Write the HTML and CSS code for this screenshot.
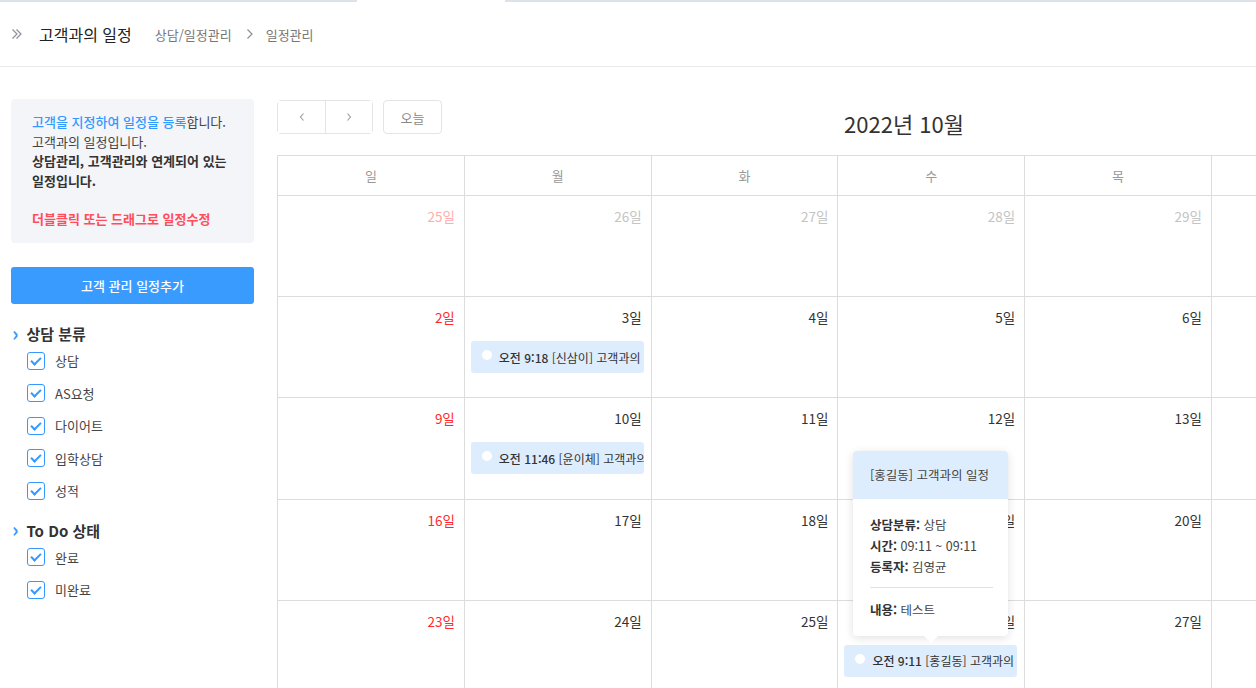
FILE: index.html
```html
<!DOCTYPE html>
<html lang="ko">
<head>
    <meta charset="UTF-8">
    <meta name="viewport" content="width=device-width, initial-scale=1.0">
    <title>고객과의 일정</title>
    <link rel="stylesheet" href="styles.css">
</head>
<body>
    <div class="tabline">
        <span class="tabline-left"></span>
        <span class="tabline-gap"></span>
        <span class="tabline-right"></span>
    </div>

    <header class="page-header">
        <svg class="header-icon" width="12" height="12" viewBox="0 0 12 12">
            <path d="M1.5 1.5 L6 6 L1.5 10.5 M5.5 1.5 L10 6 L5.5 10.5" fill="none" stroke="#8a8f99" stroke-width="1.2"/>
        </svg>
        <h1>고객과의 일정</h1>
        <span class="crumb">상담/일정관리</span>
        <svg class="crumb-sep" width="10" height="12" viewBox="0 0 10 12">
            <path d="M2.5 1.5 L7 6 L2.5 10.5" fill="none" stroke="#8a8f99" stroke-width="1.2"/>
        </svg>
        <span class="crumb">일정관리</span>
    </header>

    <div class="page">
        <aside class="sidebar">
            <div class="info-box">
                <p><span class="blue">고객을 지정하여 일정을 등록</span>합니다.</p>
                <p>고객과의 일정입니다.</p>
                <p class="bold">상담관리, 고객관리와 연계되어 있는 일정입니다.</p>
                <p class="red">더블클릭 또는 드래그로 일정수정</p>
            </div>

            <button class="btn-add">고객 관리 일정추가</button>

            <div class="filter">
                <h3 class="filter-title"><span class="chev">›</span>상담 분류</h3>
                <label class="check"><span class="box"></span>상담</label>
                <label class="check"><span class="box"></span>AS요청</label>
                <label class="check"><span class="box"></span>다이어트</label>
                <label class="check"><span class="box"></span>입학상담</label>
                <label class="check"><span class="box"></span>성적</label>
            </div>

            <div class="filter">
                <h3 class="filter-title"><span class="chev">›</span>To Do 상태</h3>
                <label class="check"><span class="box"></span>완료</label>
                <label class="check"><span class="box"></span>미완료</label>
            </div>
        </aside>

        <main class="calendar">
            <div class="toolbar">
                <div class="toolbar-left">
                    <div class="btn-group">
                        <button class="nav-btn">
                            <svg width="8" height="10" viewBox="0 0 8 10"><path d="M5.5 1.5 L2.5 5 L5.5 8.5" fill="none" stroke="#999" stroke-width="1.1"/></svg>
                        </button>
                        <button class="nav-btn">
                            <svg width="8" height="10" viewBox="0 0 8 10"><path d="M2.5 1.5 L5.5 5 L2.5 8.5" fill="none" stroke="#999" stroke-width="1.1"/></svg>
                        </button>
                    </div>
                    <button class="today-btn">오늘</button>
                </div>
                <h2 class="month-title">2022년 10월</h2>
                <div class="toolbar-right"></div>
            </div>

            <div class="grid" id="grid">
                <div class="dow">일</div>
                <div class="dow">월</div>
                <div class="dow">화</div>
                <div class="dow">수</div>
                <div class="dow">목</div>
                <div class="dow">금</div>
                <div class="dow">토</div>
            </div>

            <div class="tooltip">
                <div class="tooltip-head">[홍길동] 고객과의 일정</div>
                <div class="tooltip-body">
                    <p><b>상담분류:</b> 상담</p>
                    <p><b>시간:</b> 09:11 ~ 09:11</p>
                    <p><b>등록자:</b> 김영균</p>
                    <hr>
                    <p><b>내용:</b> 테스트</p>
                </div>
            </div>
        </main>
    </div>

    <script src="app.js"></script>
</body>
</html>
```

FILE: app.js
```js
const eventos = {
    3: '<b>오전 9:18</b> [신삼이] 고객과의 일정',
    10: '<b>오전 11:46</b> [윤이체] 고객과의 일정',
    26: '<b>오전 9:11</b> [홍길동] 고객과의 일정'
};

const grid = document.getElementById('grid');

// 첫 주: 9월 25일 ~ 10월 1일
for (let i = 0; i < 35; i++) {
    const cell = document.createElement('div');
    cell.className = 'day';

    let num = i - 5;
    let outro = false;
    if (i < 6) {
        num = 25 + i;
        outro = true;
    }

    if (outro) cell.classList.add('other');
    if (i % 7 === 0) cell.classList.add('sun');

    let html = `<div class="day-num">${num}일</div>`;
    if (!outro && eventos[num]) {
        html += `<div class="event"><span class="dot"></span><span class="event-text">${eventos[num]}</span></div>`;
    }
    cell.innerHTML = html;
    grid.appendChild(cell);
}
```

FILE: styles.css
```css
body {
    margin: 0;
    font-family: "Noto Sans CJK KR", "Noto Sans", sans-serif;
    color: #333;
    background-color: white;
    overflow: hidden;
    width: 1256px;
    height: 688px;
}

.tabline {
    display: flex;
    height: 2px;
}

.tabline-left {
    width: 357px;
    background-color: #dde2ea;
}

.tabline-gap {
    width: 148px;
}

.tabline-right {
    flex: 1;
    background-color: #dde2ea;
}

.page-header {
    display: flex;
    align-items: center;
    height: 64px;
    padding-left: 11px;
    border-bottom: 1px solid #ebebf0;
}

.header-icon {
    margin-right: 16px;
}

.page-header h1 {
    font-size: 16px;
    font-weight: 400;
    color: #222;
    margin: 0 23px 0 0;
}

.crumb {
    font-size: 13px;
    color: #777;
}

.crumb-sep {
    margin: 0 11px 0 13px;
}

.page {
    display: flex;
    padding-top: 32px;
}

.sidebar {
    width: 243px;
    margin-left: 11px;
    flex-shrink: 0;
}

.info-box {
    background-color: #f3f5f9;
    border-radius: 4px;
    padding: 13px 10px 14px 21px;
    font-size: 13px;
    line-height: 19.5px;
    color: #444;
    word-break: keep-all;
}

.info-box p {
    margin: 0;
}

.info-box .blue {
    color: #3399ff;
    font-weight: 500;
}

.info-box .bold {
    font-weight: bold;
    color: #333;
}

.info-box .red {
    color: #ff4d5a;
    font-weight: bold;
    margin-top: 19px;
}

.btn-add {
    display: block;
    width: 100%;
    height: 37px;
    margin-top: 24px;
    background-color: #3a9bff;
    color: white;
    border: none;
    border-radius: 3px;
    font-family: inherit;
    font-size: 13px;
    font-weight: 500;
}

.filter {
    margin-top: 19px;
}

.filter + .filter {
    margin-top: 12px;
}

.filter-title {
    display: flex;
    align-items: center;
    margin: 0;
    font-size: 15px;
    font-weight: bold;
    color: #333;
    height: 22px;
}

.chev {
    color: #3399ff;
    font-size: 20px;
    font-weight: bold;
    margin: -3px 8px 0 1px;
}

.check {
    display: flex;
    align-items: center;
    height: 32.5px;
    padding-left: 16px;
    font-size: 13px;
    color: #444;
}

.box {
    position: relative;
    width: 16px;
    height: 16px;
    border: 1px solid #3399ff;
    border-radius: 3px;
    margin-right: 10px;
}

.box::after {
    content: "";
    position: absolute;
    left: 5px;
    top: 2px;
    width: 4px;
    height: 8px;
    border-right: 2px solid #3399ff;
    border-bottom: 2px solid #3399ff;
    transform: rotate(45deg);
}

.calendar {
    position: relative;
    margin-left: 23px;
    flex-shrink: 0;
}

.toolbar {
    display: flex;
    align-items: center;
    width: 1254px;
    height: 34px;
    margin-top: 1px;
    margin-bottom: 21px;
}

.toolbar-left,
.toolbar-right {
    display: flex;
    width: 165px;
}

.month-title {
    flex: 1;
    text-align: center;
    margin: 12px 0 0 0;
    font-size: 22px;
    font-weight: 400;
    color: #333;
}

.btn-group {
    display: flex;
    border: 1px solid #e4e4e4;
    border-radius: 4px;
}

.nav-btn {
    width: 47px;
    height: 32px;
    background: white;
    border: none;
    display: flex;
    align-items: center;
    justify-content: center;
}

.nav-btn + .nav-btn {
    border-left: 1px solid #e4e4e4;
}

.today-btn {
    margin-left: 10px;
    width: 59px;
    height: 34px;
    background: white;
    border: 1px solid #e4e4e4;
    border-radius: 4px;
    font-family: inherit;
    font-size: 13px;
    color: #888;
}

.grid {
    display: grid;
    grid-template-columns: repeat(7, 186.8px);
    grid-auto-rows: 101.2px;
    grid-template-rows: 40px;
    border-top: 1px solid #dcdcdc;
    border-left: 1px solid #dcdcdc;
    width: 1308px;
}

.dow,
.day {
    border-right: 1px solid #dcdcdc;
    border-bottom: 1px solid #dcdcdc;
    box-sizing: border-box;
    min-width: 0;
}

.dow {
    display: flex;
    align-items: center;
    justify-content: center;
    font-size: 13px;
    color: #999;
}

.day {
    padding: 10px 7px 0 6px;
}

.day-num {
    text-align: right;
    font-size: 13.5px;
    line-height: 20px;
    padding-right: 2px;
    color: #333;
}

.sun .day-num {
    color: #ff2b2b;
}

.other .day-num {
    color: #c4c4c4;
}

.other.sun .day-num {
    color: #ffadad;
}

.event {
    display: flex;
    align-items: center;
    height: 32px;
    margin-top: 14px;
    padding-left: 11px;
    background-color: #deedfd;
    border-radius: 3px;
    overflow: hidden;
    white-space: nowrap;
    font-size: 12px;
    color: #333;
}

.event b {
    font-weight: 500;
}

.dot {
    width: 10px;
    height: 10px;
    border-radius: 50%;
    background-color: white;
    flex-shrink: 0;
    margin: -4px 7px 0 0;
}

.event-text {
    overflow: hidden;
}

.tooltip {
    position: absolute;
    left: 576px;
    top: 352px;
    width: 155px;
    background: white;
    border-radius: 4px;
    box-shadow: 0 2px 10px rgba(0,0,0,0.12);
}

.tooltip::after {
    content: "";
    position: absolute;
    left: 71px;
    bottom: -7px;
    border-left: 7px solid transparent;
    border-right: 7px solid transparent;
    border-top: 7px solid white;
}

.tooltip-head {
    background-color: #deedfd;
    border-radius: 4px 4px 0 0;
    height: 48px;
    line-height: 48px;
    padding-left: 17px;
    font-size: 12.5px;
    color: #444;
}

.tooltip-body {
    padding: 15px 15px 16px 17px;
    font-size: 12.5px;
    color: #444;
}

.tooltip-body p {
    margin: 0;
    line-height: 21px;
}

.tooltip-body b {
    color: #333;
}

.tooltip-body hr {
    border: none;
    border-top: 1px solid #e2e2e2;
    margin: 10px 0 11px 0;
}
```
